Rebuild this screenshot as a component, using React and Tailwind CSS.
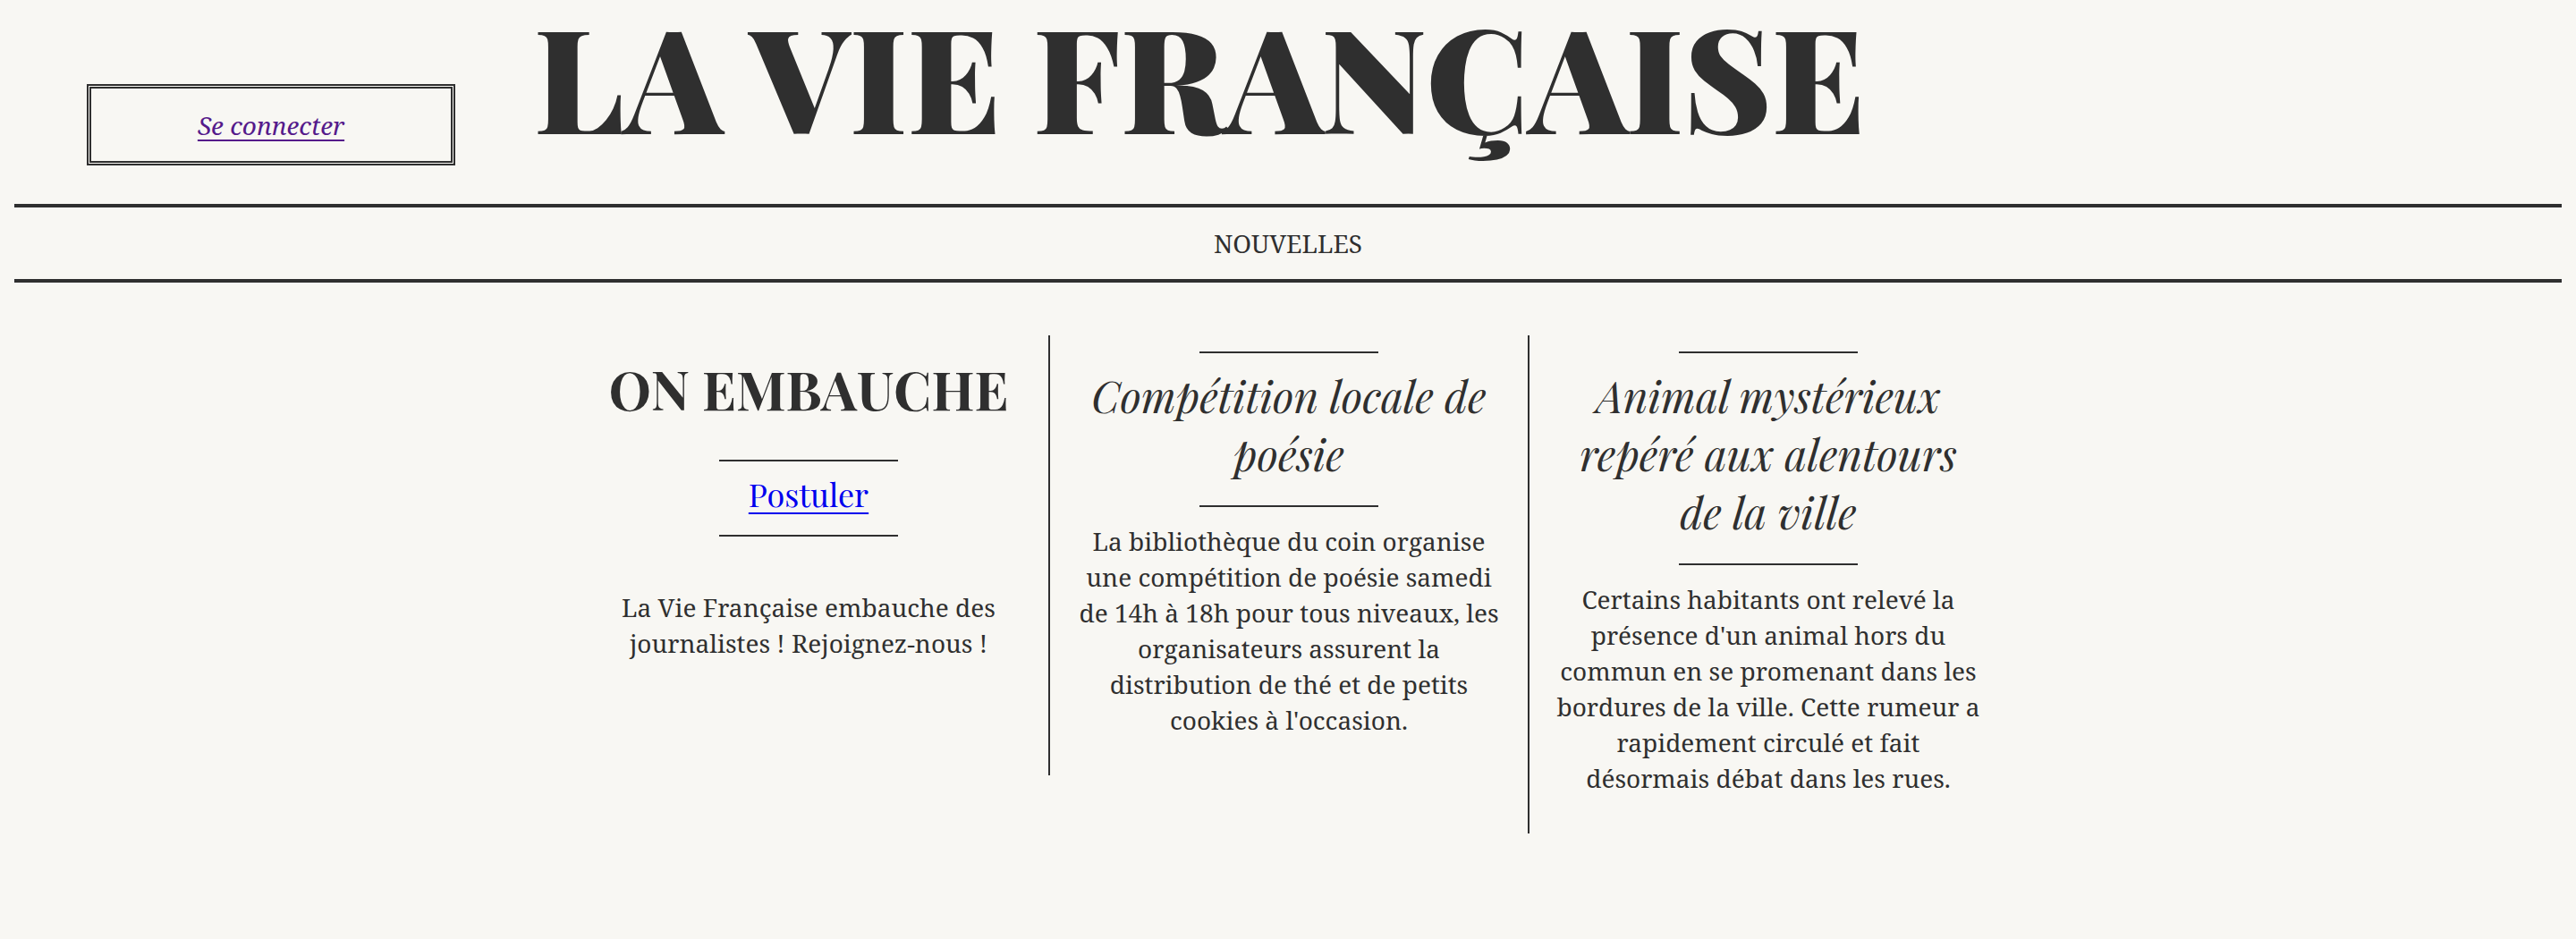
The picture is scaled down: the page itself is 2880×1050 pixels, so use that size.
import React from 'react';

function Rule() {
  return <div className="w-[200px] h-[2px] bg-[#2f2f2f]" />;
}

export default function App() {
  return (
    <div className="min-h-screen bg-[#f8f7f3] text-[#2f2f2f] px-4 [font-family:'Noto_Serif','DejaVu_Serif',serif]">
      {/* Header */}
      <header className="flex items-start h-[228px]">
        <div className="ml-[81px] mt-[94px] w-[412px] h-[91px] border-[5px] border-double border-[#2f2f2f] flex items-center justify-center shrink-0">
          <a href="#" className="text-[28px] italic text-[#551a8b] underline underline-offset-[5px] decoration-2">
            Se connecter
          </a>
        </div>
        <h1 className="ml-[88px] -mt-[24px] whitespace-nowrap text-[161px] leading-[215px] font-black [font-family:'Playfair_Display','Liberation_Serif',serif]">
          LA VIE FRANÇAISE
        </h1>
      </header>

      {/* Nav */}
      <nav className="border-y-4 border-[#2f2f2f] h-[88px] flex items-center justify-center">
        <span className="text-[28px] uppercase">Nouvelles</span>
      </nav>

      {/* Articles */}
      <main className="mt-[59px] grid grid-cols-[repeat(3,536px)] items-start justify-center text-center">
        <article className="flex flex-col items-center">
          <h2 className="mt-[23px] text-[60px] leading-[72px] font-bold [font-family:'Playfair_Display','Liberation_Serif',serif]">
            ON EMBAUCHE
          </h2>
          <div className="mt-[44px]"><Rule /></div>
          <a href="#" className="mt-[12px] text-[36px] leading-[48px] text-[#0000ee] underline decoration-2 underline-offset-[6px] [font-family:'Playfair_Display','Liberation_Serif',serif]">
            Postuler
          </a>
          <div className="mt-[22px]"><Rule /></div>
          <p className="mt-[59px] max-w-[480px] text-[28px] leading-[40px]">
            La Vie Française embauche des journalistes ! Rejoignez-nous !
          </p>
        </article>

        <article className="border-l-2 border-[#2f2f2f] flex flex-col items-center pt-[18px] pb-[42px]">
          <Rule />
          <h2 className="mt-[15px] max-w-[460px] text-[48px] leading-[65px] italic [font-family:'Playfair_Display','Liberation_Serif',serif]">
            Compétition locale de poésie
          </h2>
          <div className="mt-[25px]"><Rule /></div>
          <p className="mt-[18px] max-w-[480px] text-[28px] leading-[40px]">
            La bibliothèque du coin organise une compétition de poésie samedi de 14h à 18h pour tous niveaux, les organisateurs assurent la distribution de thé et de petits cookies à l'occasion.
          </p>
        </article>

        <article className="border-l-2 border-[#2f2f2f] flex flex-col items-center pt-[18px] pb-[42px]">
          <Rule />
          <h2 className="mt-[15px] max-w-[460px] text-[48px] leading-[65px] italic [font-family:'Playfair_Display','Liberation_Serif',serif]">
            Animal mystérieux repéré aux alentours de la ville
          </h2>
          <div className="mt-[25px]"><Rule /></div>
          <p className="mt-[18px] max-w-[480px] text-[28px] leading-[40px]">
            Certains habitants ont relevé la présence d'un animal hors du commun en se promenant dans les bordures de la ville. Cette rumeur a rapidement circulé et fait désormais débat dans les rues.
          </p>
        </article>
      </main>
    </div>
  );
}
